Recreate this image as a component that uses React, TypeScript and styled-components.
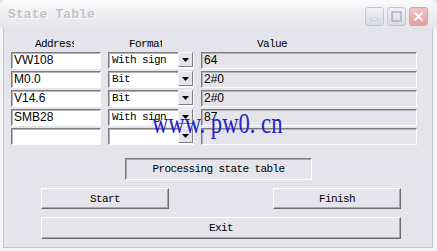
import styled, { createGlobalStyle } from "styled-components";

const GlobalStyle = createGlobalStyle`
  html, body {
    margin: 0;
    padding: 0;
    background: #e4e4ea;
  }
`;

const mono = `"Liberation Mono", "DejaVu Sans Mono", monospace`;
const sans = `"Liberation Sans", Arial, sans-serif`;

const Window = styled.div`
  position: relative;
  width: 437px;
  height: 251px;
  box-sizing: border-box;
  display: flex;
  flex-direction: column;
  background: #f4f4f6;
  border-radius: 6px 6px 0 0;
  overflow: hidden;
`;

const TitleBar = styled.div`
  height: 28px;
  flex: none;
  display: flex;
  align-items: center;
  justify-content: space-between;
  padding: 0 9px 0 8px;
  background: linear-gradient(#fbfbfc 0%, #efeff2 45%, #e6e6ea 100%);
`;

const Title = styled.span`
  font-family: ${mono};
  font-weight: bold;
  font-size: 13px;
  letter-spacing: 0.1px;
  color: #c2c2c6;
  text-shadow: 1px 1px 0 #ffffff;
`;

const Controls = styled.div`
  display: flex;
  gap: 3px;
  margin-top: 5px;
`;

const CtlButton = styled.div<{ close?: boolean }>`
  width: 19px;
  height: 19px;
  box-sizing: border-box;
  border-radius: 3px;
  border: 1px solid ${({ close }) => (close ? "#d9a2a2" : "#c2c6d0")};
  background: ${({ close }) =>
    close
      ? "linear-gradient(#f0c4c4, #e2a0a0)"
      : "linear-gradient(#f2f3f6, #d8dbe2)"};
  display: flex;
  align-items: center;
  justify-content: center;
`;

const Client = styled.div`
  flex: 1;
  margin: 0 4px 3px 3px;
  background: #e4e4ea;
  border: 1px solid #c4c4ca;
  border-top: none;
  display: flex;
  flex-direction: column;
`;

const Grid = styled.div`
  display: grid;
  grid-template-columns: 90px 86px 216px;
  padding-left: 7px;
`;

const HeaderRow = styled(Grid)`
  height: 23px;
  align-items: end;
  padding-bottom: 1px;
`;

const Header = styled.div<{ left: number; width: number }>`
  font-family: ${mono};
  font-size: 11px;
  letter-spacing: -0.6px;
  color: #000;
  margin-left: ${({ left }) => left}px;
  width: ${({ width }) => width}px;
  overflow: hidden;
  white-space: nowrap;
  line-height: 14px;
`;

const Rows = styled.div`
  display: flex;
  flex-direction: column;
  gap: 2px;
`;

const Row = styled(Grid)`
  height: 17px;
`;

const Sunken = styled.div`
  box-sizing: border-box;
  height: 17px;
  border: 1px solid;
  border-color: #7c7c80 #ffffff #ffffff #7c7c80;
  box-shadow: inset 1px 1px 0 #b4b4b8;
`;

const AddressBox = styled(Sunken)`
  width: 90px;
  background: #fff;
  font-family: ${sans};
  font-size: 12px;
  line-height: 15px;
  padding-left: 2px;
  color: #000;
`;

const Combo = styled(Sunken)`
  margin-left: 7px;
  width: 86px;
  background: #fff;
  display: flex;
  justify-content: space-between;
  font-family: ${mono};
  font-size: 11px;
  letter-spacing: -0.6px;
  line-height: 15px;
  padding-left: 3px;
  color: #000;
`;

const DropButton = styled.div`
  width: 15px;
  height: 15px;
  box-sizing: border-box;
  margin-top: -1px;
  background: #e4e4ea;
  border: 1px solid;
  border-color: #f4f4f6 #808084 #808084 #f4f4f6;
  display: flex;
  align-items: center;
  justify-content: center;
`;

const ValueBox = styled(Sunken)`
  margin-left: 14px;
  width: 216px;
  background: #e4e4ea;
  font-family: ${sans};
  font-size: 12px;
  line-height: 15px;
  padding-left: 2px;
  color: #000;
`;

const StatusRow = styled.div`
  display: flex;
  justify-content: center;
  margin-top: 13px;
`;

const Status = styled.div`
  width: 187px;
  height: 22px;
  box-sizing: border-box;
  border: 1px solid;
  border-color: #7c7c80 #ffffff #ffffff #7c7c80;
  box-shadow: inset 1px 1px 0 #a8a8ac;
  display: flex;
  align-items: center;
  justify-content: center;
  font-family: ${mono};
  font-size: 11px;
  letter-spacing: -0.6px;
  margin-left: 1px;
`;

const ButtonRow = styled.div`
  display: flex;
  justify-content: space-between;
  width: 360px;
  margin: 8px 0 0 37px;
`;

const Button = styled.div<{ wide?: boolean }>`
  width: ${({ wide }) => (wide ? 360 : 128)}px;
  height: ${({ wide }) => (wide ? 22 : 21)}px;
  box-sizing: border-box;
  border: 1px solid;
  border-color: #ffffff #6c6c70 #6c6c70 #ffffff;
  box-shadow: inset -1px -1px 0 #a8a8ae;
  background: #e4e4ea;
  display: flex;
  align-items: center;
  justify-content: center;
  font-family: ${mono};
  font-size: 11px;
  letter-spacing: -0.6px;
  color: #000;
`;

const Watermark = styled.div`
  position: absolute;
  left: 152px;
  top: 108px;
  font-family: "Liberation Serif", "Times New Roman", serif;
  font-size: 29px;
  line-height: 30px;
  color: #2222cc;
  white-space: nowrap;
  transform: scaleX(0.78);
  transform-origin: left top;
  pointer-events: none;
`;

const Arrow = () => (
  <svg width="7" height="4" viewBox="0 0 7 4">
    <path d="M0 0H7L3.5 4Z" fill="#000" />
  </svg>
);

const rows = [
  { address: "VW108", format: "With sign", value: "64" },
  { address: "M0.0", format: "Bit", value: "2#0" },
  { address: "V14.6", format: "Bit", value: "2#0" },
  { address: "SMB28", format: "With sign", value: "87" },
  { address: "", format: "", value: "" },
];

const App = () => {
  return (
    <>
      <GlobalStyle />
      <Window>
        <TitleBar>
          <Title>State Table</Title>
          <Controls>
            <CtlButton>
              <svg width="9" height="9" viewBox="0 0 9 9">
                <rect x="1" y="6" width="7" height="2" fill="#ffffff" stroke="#aab0bc" strokeWidth="0.6" />
              </svg>
            </CtlButton>
            <CtlButton>
              <svg width="11" height="11" viewBox="0 0 11 11">
                <rect x="1" y="1" width="9" height="9" fill="none" stroke="#aab0bc" strokeWidth="1.4" />
              </svg>
            </CtlButton>
            <CtlButton close>
              <svg width="11" height="11" viewBox="0 0 11 11">
                <path d="M1.5 1.5L9.5 9.5M9.5 1.5L1.5 9.5" stroke="#ffffff" strokeWidth="2" />
              </svg>
            </CtlButton>
          </Controls>
        </TitleBar>
        <Client>
          <HeaderRow>
            <Header left={24} width={39}>Address</Header>
            <Header left={28} width={33}>Format</Header>
            <Header left={70} width={40}>Value</Header>
          </HeaderRow>
          <Rows>
            {rows.map((r, i) => (
              <Row key={i}>
                <AddressBox>{r.address}</AddressBox>
                <Combo>
                  <span>{r.format}</span>
                  <DropButton>
                    <Arrow />
                  </DropButton>
                </Combo>
                <ValueBox>{r.value}</ValueBox>
              </Row>
            ))}
          </Rows>
          <StatusRow>
            <Status>Processing state table</Status>
          </StatusRow>
          <ButtonRow>
            <Button>Start</Button>
            <Button>Finish</Button>
          </ButtonRow>
          <ButtonRow>
            <Button wide>Exit</Button>
          </ButtonRow>
        </Client>
        <Watermark>www. pw0. cn</Watermark>
      </Window>
    </>
  );
};

export default App;
